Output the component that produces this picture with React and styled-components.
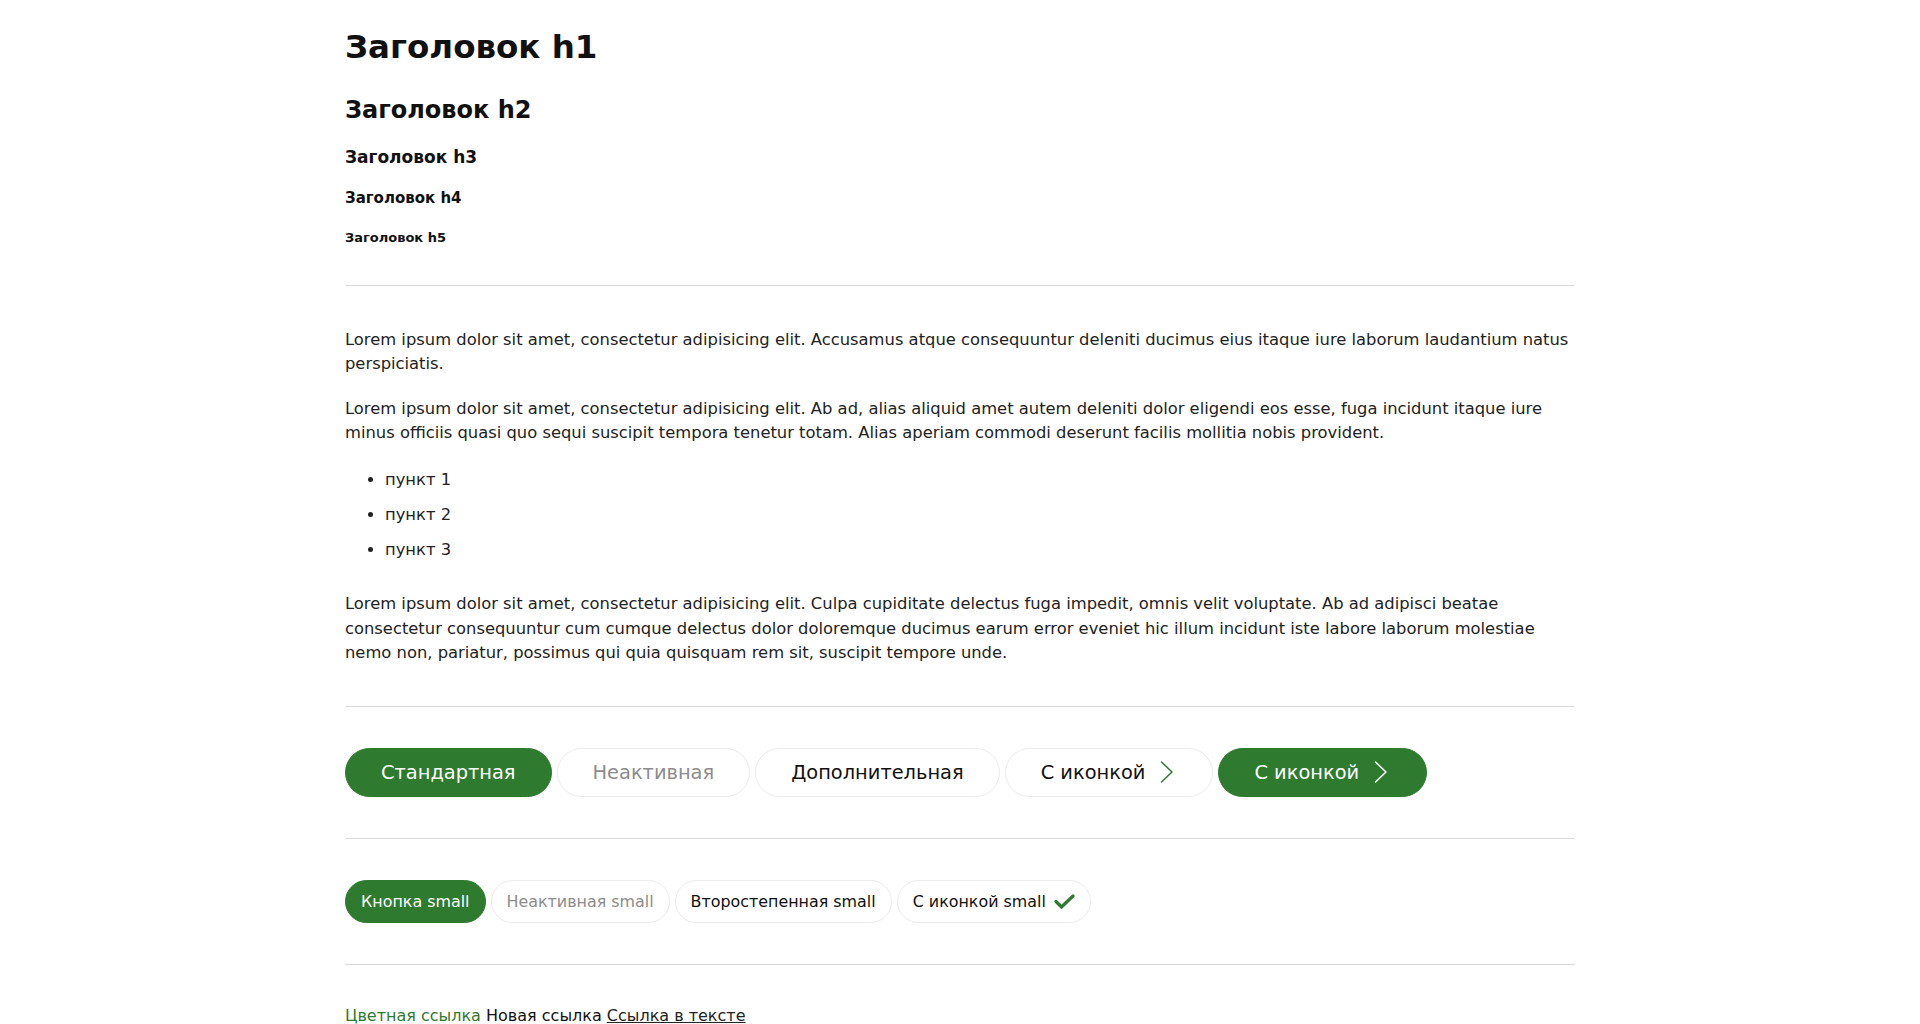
import React from 'react';
import styled, { createGlobalStyle } from 'styled-components';

const GREEN = '#2e7a2e';

const GlobalStyle = createGlobalStyle`
  html, body {
    margin: 0;
    padding: 0;
    background: #fff;
  }
  body {
    font-family: "DejaVu Sans", "Open Sans", sans-serif;
    color: #222;
  }
  * {
    box-sizing: border-box;
  }
`;

const Page = styled.div`
  width: 1230px;
  margin: 0 auto;
`;

const Section = styled.section`
  padding: ${props => props.$pad || '42px 0'};
  border-bottom: ${props => (props.$last ? 'none' : '1px solid #d9d9d9')};
`;

const Headings = styled.div`
  display: flex;
  flex-direction: column;
  gap: 20px;
  color: #111;
`;

const H1 = styled.h1`
  margin: 0;
  font-size: 32.5px;
  line-height: 40px;
  font-weight: 700;
`;

const H2 = styled.h2`
  margin: 7.5px 0 0;
  font-size: 24px;
  line-height: 30px;
  font-weight: 700;
`;

const H3 = styled.h3`
  margin: 1px 0 0;
  font-size: 17px;
  line-height: 22px;
  font-weight: 700;
`;

const H4 = styled.h4`
  margin: 0 0 1px;
  font-size: 15px;
  line-height: 20px;
  font-weight: 700;
`;

const H5 = styled.h5`
  margin: 0;
  font-size: 13px;
  line-height: 18px;
  font-weight: 700;
`;

const Text = styled.div`
  font-size: 16.35px;
  line-height: 1.5;
  color: #222;

  p {
    margin: 0 0 20px;
  }

  p:last-child {
    margin-bottom: 0;
  }
`;

const List = styled.ul`
  margin: 22px 0 30px;
  padding-left: 40px;
`;

const Item = styled.li`
  margin-bottom: 10.5px;
`;

const ButtonRow = styled.div`
  display: flex;
  align-items: center;
  gap: 5px;
`;

const Button = styled.button`
  display: inline-flex;
  align-items: center;
  gap: ${props => (props.$small ? '8px' : '12px')};
  height: ${props => (props.$small ? '43px' : '49px')};
  padding: ${props => (props.$small ? '0 15px' : '0 35px')};
  border-radius: 25px;
  font-family: inherit;
  font-size: ${props => (props.$small ? '15.9px' : '19.4px')};
  font-weight: 400;
  cursor: pointer;
  border: 1px solid ${props => (props.$variant === 'primary' ? GREEN : '#ebebeb')};
  background: ${props => (props.$variant === 'primary' ? GREEN : '#fff')};
  color: ${props =>
    props.$variant === 'primary' ? '#fff' : props.$variant === 'disabled' ? '#8c8c8c' : '#111'};

  &:disabled {
    cursor: default;
  }
`;

const Links = styled.div`
  font-size: 16px;
  line-height: 20px;
`;

const Link = styled.a`
  color: ${props => props.$color || '#111'};
  text-decoration: ${props => (props.$underline ? 'underline' : 'none')};
  cursor: pointer;
`;

const Chevron = ({ color }) => (
  <svg width="20" height="22" viewBox="0 0 20 22" fill="none">
    <polyline points="4.5,1 15,11 4.5,21" stroke={color} strokeWidth="1.5" strokeLinecap="round" strokeLinejoin="round" />
  </svg>
);

const Check = () => (
  <svg width="21" height="15" viewBox="0 0 21 15" fill="none">
    <polyline points="2,7.5 7.5,13 19,2" stroke={GREEN} strokeWidth="3.2" strokeLinecap="round" strokeLinejoin="round" />
  </svg>
);

export default function App() {
  return (
    <>
      <GlobalStyle />
      <Page>
        <Section $pad="27px 0 38px">
          <Headings>
            <H1>Заголовок h1</H1>
            <H2>Заголовок h2</H2>
            <H3>Заголовок h3</H3>
            <H4>Заголовок h4</H4>
            <H5>Заголовок h5</H5>
          </Headings>
        </Section>

        <Section $pad="42px 0 40px">
          <Text>
            <p>
              Lorem ipsum dolor sit amet, consectetur adipisicing elit. Accusamus atque consequuntur deleniti
              ducimus eius itaque iure laborum laudantium natus perspiciatis.
            </p>
            <p>
              Lorem ipsum dolor sit amet, consectetur adipisicing elit. Ab ad, alias aliquid amet autem deleniti
              dolor eligendi eos esse, fuga incidunt itaque iure minus officiis quasi quo sequi suscipit tempora
              tenetur totam. Alias aperiam commodi deserunt facilis mollitia nobis provident.
            </p>
            <List>
              <Item>пункт 1</Item>
              <Item>пункт 2</Item>
              <Item>пункт 3</Item>
            </List>
            <p>
              Lorem ipsum dolor sit amet, consectetur adipisicing elit. Culpa cupiditate delectus fuga impedit,
              omnis velit voluptate. Ab ad adipisci beatae consectetur consequuntur cum cumque delectus dolor
              doloremque ducimus earum error eveniet hic illum incidunt iste labore laborum molestiae nemo non,
              pariatur, possimus qui quia quisquam rem sit, suscipit tempore unde.
            </p>
          </Text>
        </Section>

        <Section $pad="41px 0 41px">
          <ButtonRow>
            <Button $variant="primary">Стандартная</Button>
            <Button $variant="disabled" disabled>Неактивная</Button>
            <Button>Дополнительная</Button>
            <Button>
              С иконкой
              <Chevron color={GREEN} />
            </Button>
            <Button $variant="primary">
              С иконкой
              <Chevron color="#fff" />
            </Button>
          </ButtonRow>
        </Section>

        <Section $pad="41px 0 41px">
          <ButtonRow>
            <Button $small $variant="primary">Кнопка small</Button>
            <Button $small $variant="disabled" disabled>Неактивная small</Button>
            <Button $small>Второстепенная small</Button>
            <Button $small>
              С иконкой small
              <Check />
            </Button>
          </ButtonRow>
        </Section>

        <Section $pad="41px 0 0" $last>
          <Links>
            <Link $color={GREEN}>Цветная ссылка</Link> <Link>Новая ссылка</Link>{' '}
            <Link $underline $color="#222">Ссылка в тексте</Link>
          </Links>
        </Section>
      </Page>
    </>
  );
}
